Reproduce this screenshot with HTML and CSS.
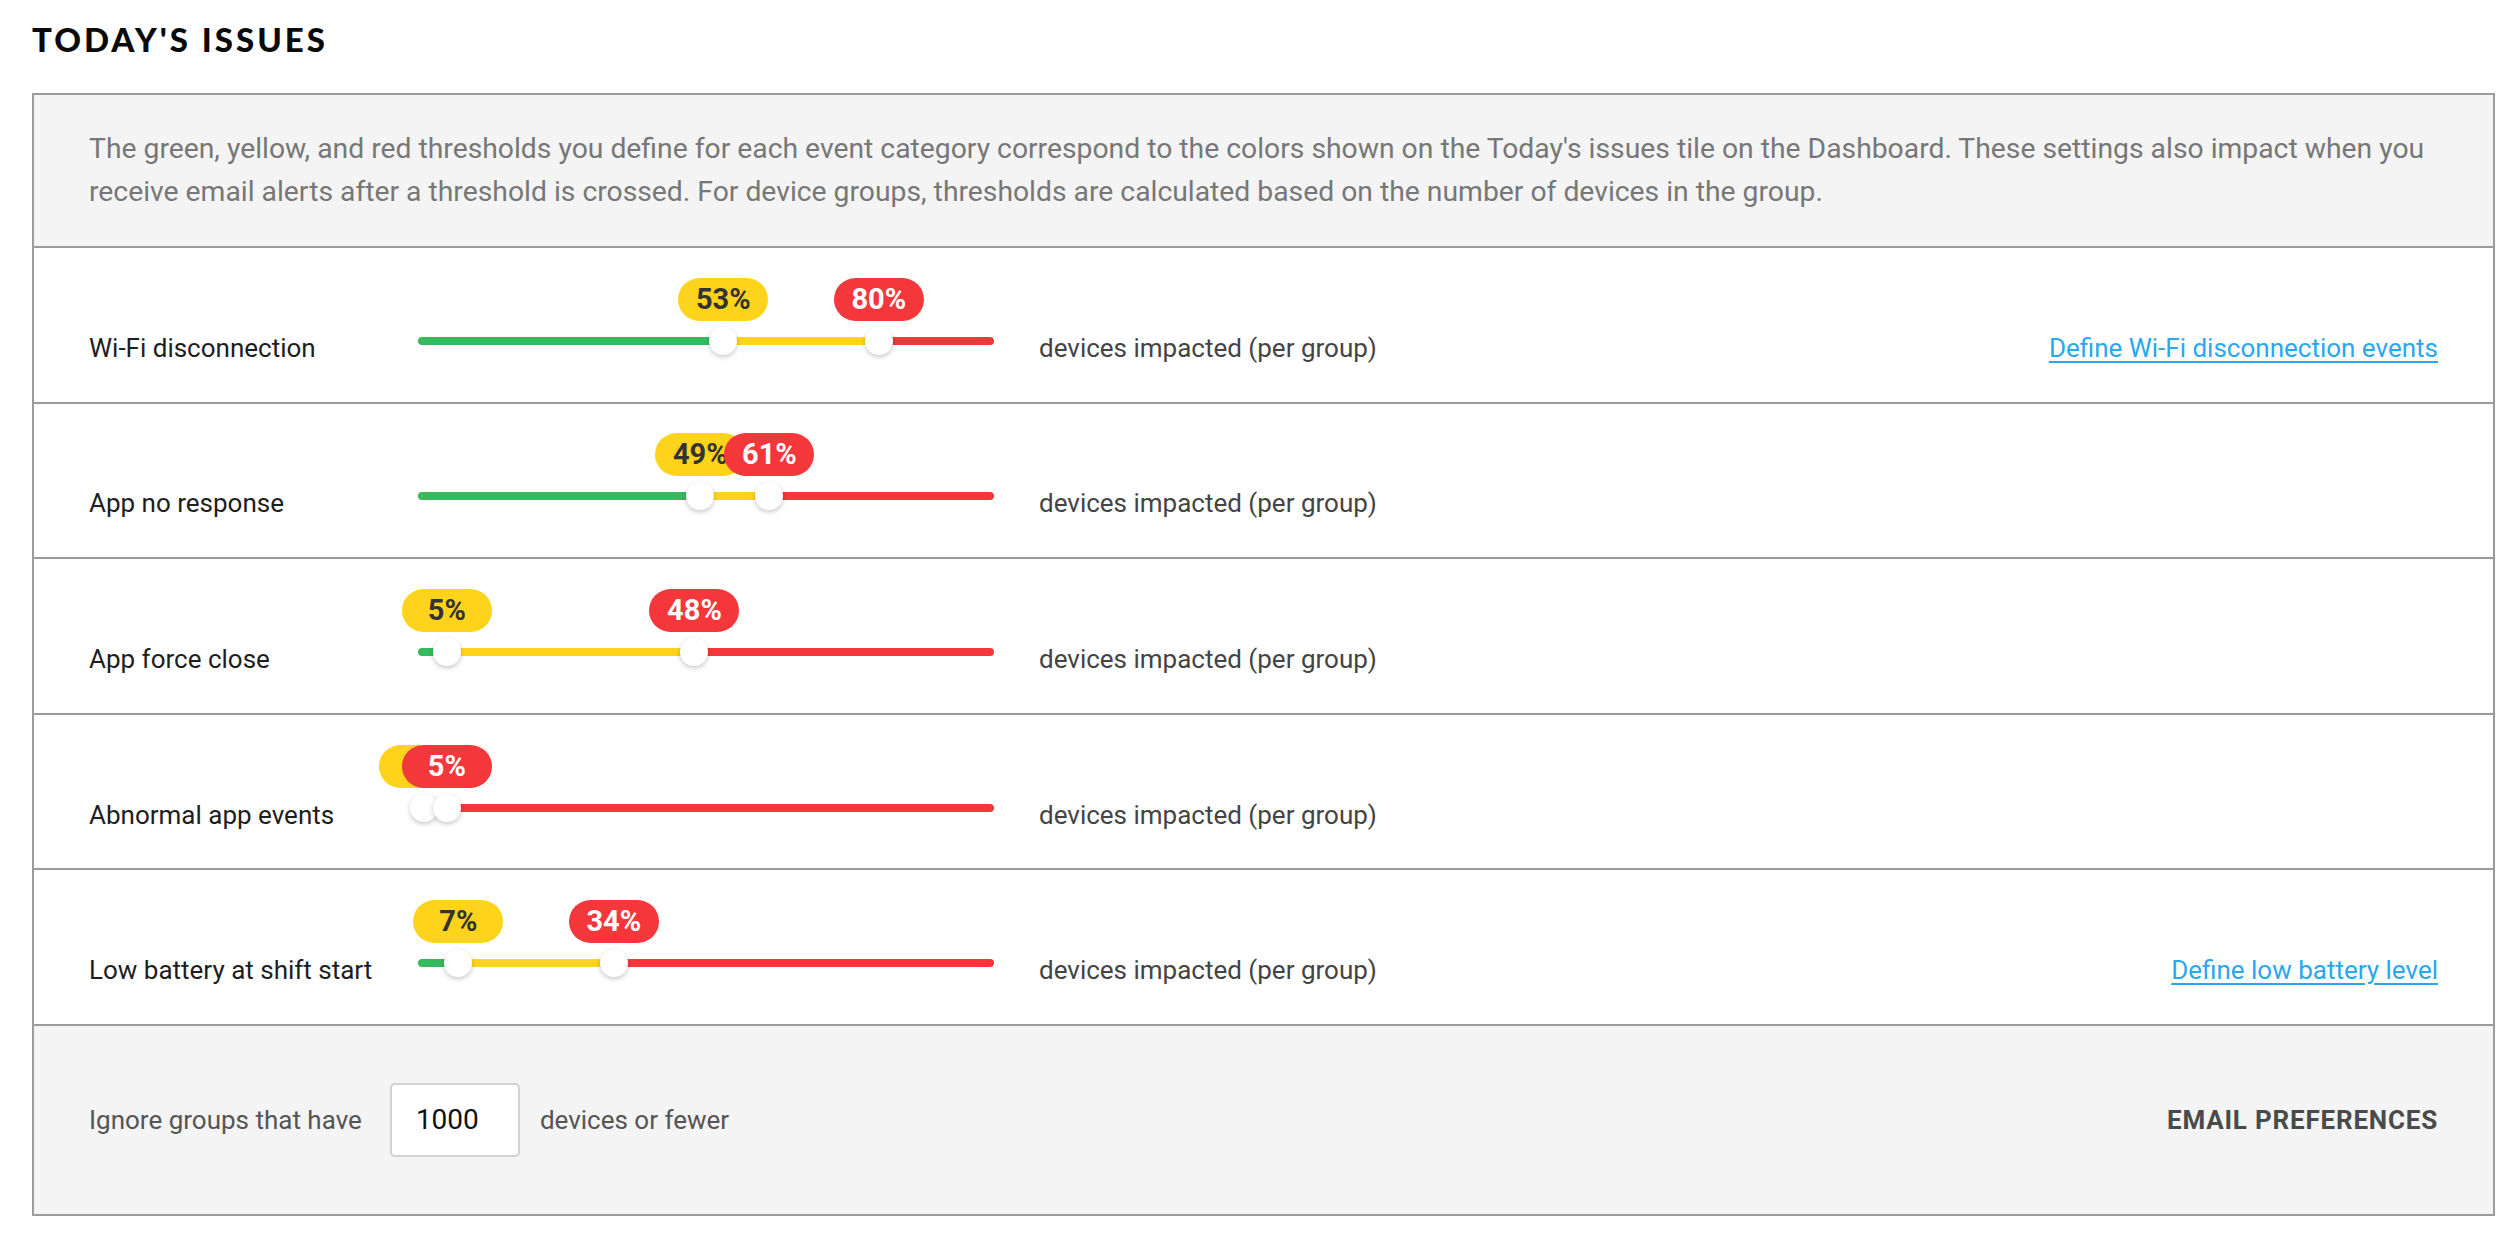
FILE: index.html
```html
<!DOCTYPE html>
<html lang="en">
<head>
<meta charset="utf-8">
<title>Today's issues</title>
<link rel="stylesheet" href="styles.css">
</head>
<body>
<div class="page">
  <h1 class="title">TODAY'S ISSUES</h1>
  <section class="panel">
    <p class="intro">The green, yellow, and red thresholds you define for each event category correspond to the colors shown on the Today's issues tile on the Dashboard. These settings also impact when you receive email alerts after a threshold is crossed. For device groups, thresholds are calculated based on the number of devices in the group.</p>

    <div class="row">
      <div class="label">Wi-Fi disconnection</div>
      <div class="slider" style="--y:53%; --r:80%;">
        <div class="track"></div>
        <span class="badge badge-y">53%</span><span class="thumb thumb-y"></span>
        <span class="badge badge-r">80%</span><span class="thumb thumb-r"></span>
      </div>
      <div class="unit">devices impacted (per group)</div>
      <a class="link" href="#">Define Wi-Fi disconnection events</a>
    </div>

    <div class="row">
      <div class="label">App no response</div>
      <div class="slider" style="--y:49%; --r:61%;">
        <div class="track"></div>
        <span class="badge badge-y">49%</span><span class="thumb thumb-y"></span>
        <span class="badge badge-r">61%</span><span class="thumb thumb-r"></span>
      </div>
      <div class="unit">devices impacted (per group)</div>
    </div>

    <div class="row">
      <div class="label">App force close</div>
      <div class="slider" style="--y:5%; --r:48%;">
        <div class="track"></div>
        <span class="badge badge-y">5%</span><span class="thumb thumb-y"></span>
        <span class="badge badge-r">48%</span><span class="thumb thumb-r"></span>
      </div>
      <div class="unit">devices impacted (per group)</div>
    </div>

    <div class="row">
      <div class="label">Abnormal app events</div>
      <div class="slider" style="--y:1%; --r:5%;">
        <div class="track"></div>
        <span class="badge badge-y">1%</span><span class="thumb thumb-y"></span>
        <span class="badge badge-r">5%</span><span class="thumb thumb-r"></span>
      </div>
      <div class="unit">devices impacted (per group)</div>
    </div>

    <div class="row">
      <div class="label">Low battery at shift start</div>
      <div class="slider" style="--y:7%; --r:34%;">
        <div class="track"></div>
        <span class="badge badge-y">7%</span><span class="thumb thumb-y"></span>
        <span class="badge badge-r">34%</span><span class="thumb thumb-r"></span>
      </div>
      <div class="unit">devices impacted (per group)</div>
      <a class="link" href="#">Define low battery level</a>
    </div>

    <div class="footer">
      <span class="ftext">Ignore groups that have</span>
      <input class="count" type="text" value="1000">
      <span class="ftext">devices or fewer</span>
      <a class="prefs" href="#">EMAIL PREFERENCES</a>
    </div>
  </section>
</div>
</body>
</html>
```

FILE: styles.css
```css
html, body {
  margin: 0;
  padding: 0;
  background: #ffffff;
}

.page {
  padding: 19px 19px 0 32px;
  font-family: "Roboto", "Noto Sans", sans-serif;
}

.title {
  margin: 0 0 34px 0;
  font-family: "Lato", "Open Sans", sans-serif;
  font-weight: 900;
  font-size: 33px;
  line-height: 40px;
  letter-spacing: 3px;
  color: #0a0a0a;
}

.panel {
  border: 2px solid #9b9b9b;
  background: #ffffff;
}

.intro {
  margin: 0;
  padding: 33px 55px 33px 55px;
  background: #f4f4f4;
  color: #777777;
  font-size: 28.3px;
  line-height: 42.5px;
}

.row {
  height: 155.6px;
  box-sizing: border-box;
  border-top: 2px solid #9b9b9b;
  padding: 46px 55px 0 55px;
  display: flex;
  align-items: center;
}

.label {
  width: 329px;
  flex: none;
  font-size: 26px;
  line-height: 36px;
  color: #1e1e1e;
}

.slider {
  position: relative;
  width: 576px;
  height: 28px;
  flex: none;
  margin-bottom: 14px;
}

.track {
  position: absolute;
  left: 0;
  right: 0;
  top: 10px;
  height: 8px;
  border-radius: 4px;
  background: linear-gradient(to right,
    #37ba5d 0, #37ba5d var(--y),
    #fdd41b var(--y), #fdd41b var(--r),
    #f3373a var(--r), #f3373a 100%);
}

.thumb {
  position: absolute;
  top: 0;
  width: 28px;
  height: 28px;
  margin-left: -14px;
  border-radius: 50%;
  background: #ffffff;
  box-shadow: 0 2px 5px rgba(0, 0, 0, 0.22);
}

.thumb-y { left: var(--y); z-index: 1; }
.thumb-r { left: var(--r); z-index: 2; }

.badge {
  position: absolute;
  bottom: calc(100% + 6px);
  width: 90px;
  height: 43px;
  margin-left: -45px;
  border-radius: 22px;
  display: flex;
  align-items: center;
  justify-content: center;
  font-size: 29px;
  font-weight: 700;
  line-height: 1;
}

.badge-y {
  left: var(--y);
  background: #fdd41b;
  color: #333333;
  z-index: 1;
}

.badge-r {
  left: var(--r);
  background: #f3373a;
  color: #ffffff;
  z-index: 2;
}

.unit {
  margin-left: 45px;
  font-size: 26px;
  line-height: 36px;
  color: #444444;
}

.link {
  margin-left: auto;
  font-size: 26px;
  line-height: 36px;
  color: #2aa7ee;
  text-decoration: underline;
  text-underline-offset: 4px;
}

.footer {
  height: 190px;
  box-sizing: border-box;
  border-top: 2px solid #9b9b9b;
  background: #f4f4f4;
  padding: 0 55px;
  display: flex;
  align-items: center;
}

.ftext {
  font-size: 26px;
  line-height: 36px;
  color: #555555;
}

.count {
  width: 130px;
  height: 74px;
  box-sizing: border-box;
  margin: 0 20px 0 28px;
  padding: 0 0 0 24px;
  border: 2px solid #d2d2d2;
  border-radius: 5px;
  background: #ffffff;
  font-family: "Roboto", "Noto Sans", sans-serif;
  font-size: 28px;
  color: #111111;
  outline: none;
}

.prefs {
  margin-left: auto;
  font-size: 26px;
  font-weight: 700;
  letter-spacing: 0.8px;
  color: #4a4a4a;
  text-decoration: none;
}
```
